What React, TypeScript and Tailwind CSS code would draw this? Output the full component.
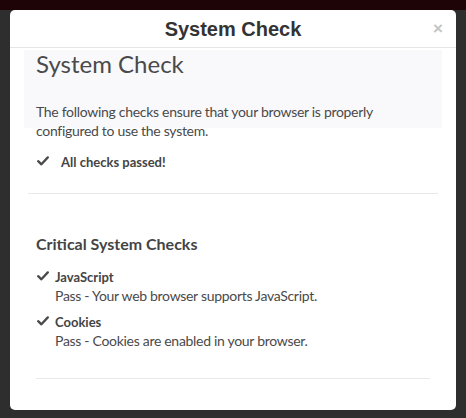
import React from 'react'

const lato = { fontFamily: 'Lato, "Open Sans", sans-serif' }

function Check({ className = '' }: { className?: string }) {
  return (
    <svg className={className} width="12" height="10" viewBox="0 0 12 10" fill="none">
      <path d="M1.2 5.2 4.4 8.3 10.8 1.4" stroke="#4a4a4a" strokeWidth="2.3" strokeLinecap="round" strokeLinejoin="round" />
    </svg>
  )
}

interface Item {
  name: string
  detail: string
}

const items: Item[] = [
  { name: 'JavaScript', detail: 'Pass - Your web browser supports JavaScript.' },
  { name: 'Cookies', detail: 'Pass - Cookies are enabled in your browser.' },
]

export default function App() {
  return (
    <div className="w-[466px] h-[418px] bg-[#2e2e2e] overflow-hidden flex flex-col">
      <div className="h-[10px] bg-[#1e0407]" />
      <div className="px-[10px]">
        <div className="h-[400px] bg-white rounded-[5px] flex flex-col" style={lato}>
          {/* Header */}
          <div className="relative h-[38px] border-b border-[#e6e6e6] flex items-center justify-center">
            <h2 className="text-[20px] leading-[22px] font-bold text-[#333]" style={{ fontFamily: '"Liberation Sans", Arial, sans-serif' }}>
              System Check
            </h2>
            <span className="absolute right-[13px] top-[9px] text-[17px] leading-[20px] font-bold text-[#c4c4c4]" style={{ fontFamily: '"Liberation Sans", Arial, sans-serif' }}>
              ×
            </span>
          </div>

          {/* Intro */}
          <div className="mx-[14px] mt-[2px] h-[78px] px-3 bg-[#f9f9fc]">
            <h1 className="text-[24px] leading-[28px] text-[#4a4a4a]">System Check</h1>
            <p className="mt-[24px] text-[14px] leading-[19px] tracking-[-0.3px] text-[#4a4a4a]">
              The following checks ensure that your browser is properly configured to use the system.
            </p>
          </div>

          <div className="px-[26px] mt-[25px] flex items-center">
            <Check className="ml-[1px] -mt-[3px]" />
            <span className="ml-[12px] text-[13px] leading-[18px] font-bold text-[#444]">All checks passed!</span>
          </div>

          <div className="mx-[18px] mt-[22px] border-t border-[#e8e8e8]" />

          {/* Critical checks */}
          <div className="px-[26px]">
            <h3 className="mt-[40px] text-[16px] leading-[20px] font-bold text-[#444]">Critical System Checks</h3>
            {items.map((it, i) => (
              <div key={it.name} className={i === 0 ? 'mt-[14px]' : 'mt-[8px]'}>
                <div className="flex items-center">
                  <Check className="ml-[1px] -mt-[2px]" />
                  <span className="ml-[6px] text-[13px] leading-[18px] font-bold text-[#444]">{it.name}</span>
                </div>
                <p className="pl-[19px] text-[14px] leading-[19px] tracking-[-0.3px] text-[#4a4a4a]">{it.detail}</p>
              </div>
            ))}
          </div>

          <div className="mx-[26px] mt-[28px] border-t border-[#e8e8e8]" />
        </div>
      </div>
    </div>
  )
}
